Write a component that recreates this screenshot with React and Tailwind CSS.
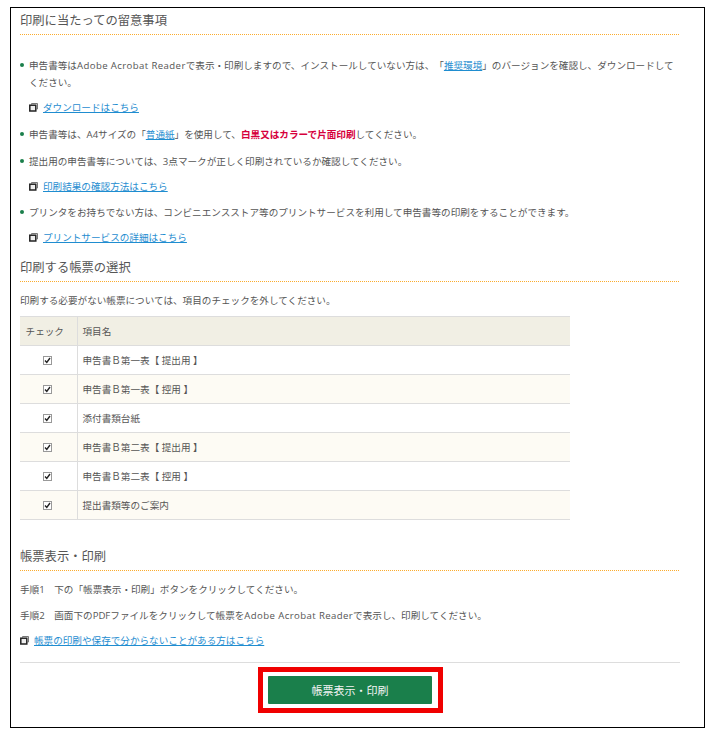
import React from 'react';

function WindowIcon() {
  return (
    <svg width="9" height="9" viewBox="0 0 9 9" className="shrink-0">
      <path d="M2.5 1.5 V0.5 H8.5 V6 H7.5" fill="none" stroke="#777" strokeWidth="1" />
      <rect x="0.8" y="2.2" width="6" height="5.8" fill="#eee" stroke="#222" strokeWidth="1.5" />
    </svg>
  );
}

function Heading({ children, className }) {
  return (
    <div className={`text-[12.3px] leading-[25px] text-[#555] ${className || ''}`}>
      <div className="h-[26px]">{children}</div>
      <div className="h-px bg-[repeating-linear-gradient(90deg,#fbac2e_0,#fbac2e_1px,#fff_1px,#fff_2px)]" />
    </div>
  );
}

function DocLink({ children, className }) {
  return (
    <div className={`flex items-center gap-[5px] pl-[9px] ${className || ''}`}>
      <WindowIcon />
      <a className="text-[#1f8dd0] underline">{children}</a>
    </div>
  );
}

function Bullet({ children, className }) {
  return (
    <div className={`relative pl-[9px] ${className || ''}`}>
      <span className="absolute left-0 top-[6px] h-[4px] w-[4px] rounded-full bg-[#1a7f4b]" />
      {children}
    </div>
  );
}

function Adobe() {
  return <span className="tracking-[0.4px]">Adobe Acrobat Reader</span>;
}

const rows = [
  '申告書Ｂ第一表【 提出用 】',
  '申告書Ｂ第一表【 控用 】',
  '添付書類台紙',
  '申告書Ｂ第二表【 提出用 】',
  '申告書Ｂ第二表【 控用 】',
  '提出書類等のご案内',
];

function CheckBox() {
  return (
    <svg width="9" height="9" viewBox="0 0 9 9">
      <rect x="0.5" y="0.5" width="8" height="8" fill="#fff" stroke="#999" />
      <path d="M2 4.5 L3.8 6.5 L7 2" fill="none" stroke="#222" strokeWidth="1.4" />
    </svg>
  );
}

export default function App() {
  return (
    <div className="h-[736px] w-[712px] bg-white pt-[7px] pl-[10px]" style={{ fontFamily: '"Open Sans", "Noto Sans CJK JP", sans-serif' }}>
      <div className="h-[721px] w-[695px] border border-black pl-[9px] text-[9.6px] leading-[17px] text-[#555] [text-spacing-trim:space-all]">
        <div className="w-[660px]">
          <Heading>印刷に当たっての留意事項</Heading>

          <Bullet className="mt-[22px]">
            申告書等は<Adobe />で表示・印刷しますので、インストールしていない方は、「<a className="text-[#1f8dd0] underline">推奨環境</a>」のバージョンを確認し、ダウンロードして<br />ください。
          </Bullet>
          <DocLink className="mt-[8px]">ダウンロードはこちら</DocLink>
          <Bullet className="mt-[10px]">
            申告書等は、A4サイズの「<a className="text-[#1f8dd0] underline">普通紙</a>」を使用して、<b className="text-[#d6003c]">白黒又はカラーで片面印刷</b>してください。
          </Bullet>
          <Bullet className="mt-[10px]">提出用の申告書等については、3点マークが正しく印刷されているか確認してください。</Bullet>
          <DocLink className="mt-[8px]">印刷結果の確認方法はこちら</DocLink>
          <Bullet className="mt-[9px]">プリンタをお持ちでない方は、コンビニエンスストア等のプリントサービスを利用して申告書等の印刷をすることができます。</Bullet>
          <DocLink className="mt-[8px]">プリントサービスの詳細はこちら</DocLink>

          <Heading className="mt-[9px]">印刷する帳票の選択</Heading>
          <p className="mt-[10px]">印刷する必要がない帳票については、項目のチェックを外してください。</p>

          <table className="mt-[7px] w-[550px] border-collapse">
            <thead>
              <tr className="h-[29px] bg-[#f1efe4]">
                <th className="w-[57px] border border-l-0 border-[#ddd] pr-[7px] text-center font-normal">チェック</th>
                <th className="border border-r-0 border-[#ddd] pl-[5px] text-left font-normal">項目名</th>
              </tr>
            </thead>
            <tbody>
              {rows.map((name, i) => (
                <tr key={i} className={i % 2 === 1 ? 'h-[29px] bg-[#fdfbf4]' : 'h-[29px] bg-white'}>
                  <td className="border border-l-0 border-[#ddd] pr-[2px] text-center">
                    <span className="inline-flex align-middle"><CheckBox /></span>
                  </td>
                  <td className="border border-r-0 border-[#ddd] pl-[5px]">{name}</td>
                </tr>
              ))}
            </tbody>
          </table>

          <Heading className="mt-[24px]">帳票表示・印刷</Heading>
          <p className="mt-[10px]">手順1　下の「帳票表示・印刷」ボタンをクリックしてください。</p>
          <p className="mt-[9px]">手順2　画面下のPDFファイルをクリックして帳票を<Adobe />で表示し、印刷してください。</p>
          <DocLink className="mt-[8px] !pl-0">帳票の印刷や保存で分からないことがある方はこちら</DocLink>

          <div className="mt-[13px] border-t border-[#ddd] pt-[4px]">
            <div className="ml-[238px] w-[185px] border-[5px] border-[#f00000] py-[4px] pr-[6px] pl-[5px]">
              <button className="block h-[28px] w-[164px] rounded-[1px] bg-[#1a7f4b] text-[11px] text-[#f4f4f4]">帳票表示・印刷</button>
            </div>
          </div>
        </div>
      </div>
    </div>
  );
}
